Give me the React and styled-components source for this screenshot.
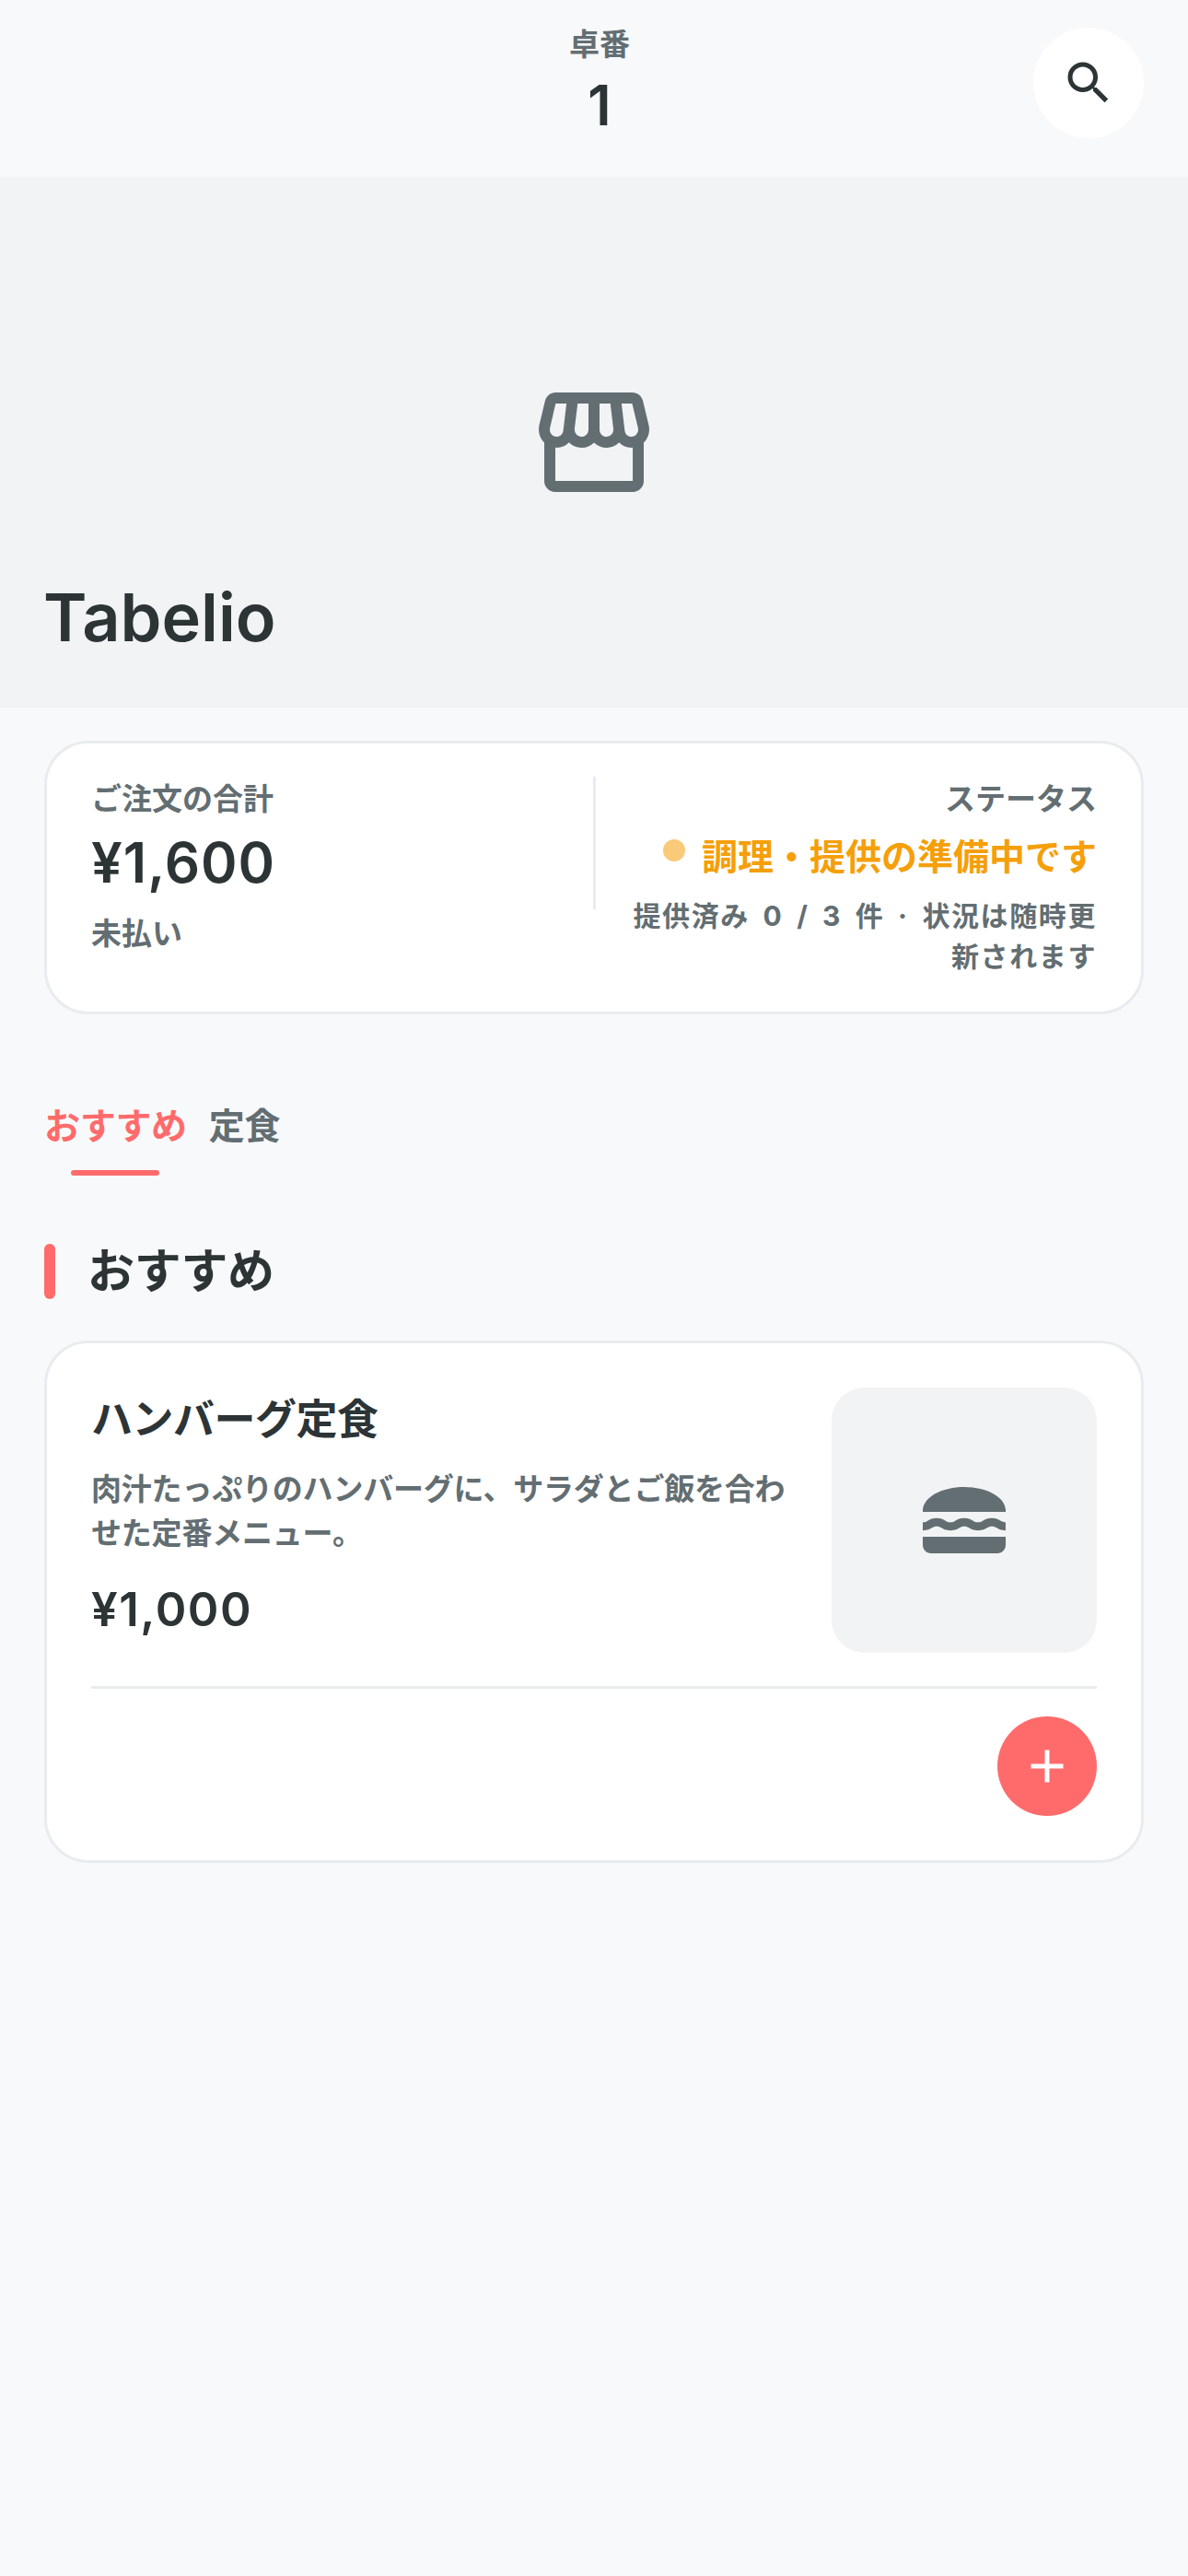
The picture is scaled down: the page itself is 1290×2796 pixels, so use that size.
import React from 'react';
import styled, { createGlobalStyle } from 'styled-components';
import { MdAdd, MdLunchDining, MdOutlineStorefront, MdSearch } from 'react-icons/md';

const GlobalStyle = createGlobalStyle`
  html, body {
    background: #f8f9fb;
    margin: 0;
    padding: 0;
  }
  body {
    color: #2d3436;
    font-family: Inter, "Noto Sans CJK JP", sans-serif;
  }
  * {
    box-sizing: border-box;
  }
`;

const Page = styled.div`
  background: #f8f9fb;
  min-height: 2796px;
  width: 1290px;
`;

const Header = styled.header`
  align-items: flex-start;
  display: flex;
  height: 192px;
  justify-content: space-between;
  padding: 24px 48px 0;
`;

const HeaderSpacer = styled.div`
  width: 132px;
`;

const TableInfo = styled.div`
  align-items: center;
  display: flex;
  flex-direction: column;
`;

const TableLabel = styled.span`
  color: #636e72;
  font-size: 33px;
  font-weight: 700;
  line-height: 48px;
`;

const TableNumber = styled.span`
  font-size: 60px;
  font-weight: 600;
  line-height: 66px;
  margin: 9px 0 0;
`;

const SearchButton = styled.button`
  align-items: center;
  background: #fff;
  border: 0;
  border-radius: 50%;
  color: #2d3436;
  display: flex;
  height: 120px;
  justify-content: center;
  margin: 6px 0 0;
  padding: 0;
  width: 120px;
`;

const Hero = styled.div`
  align-items: center;
  background: #f1f3f5;
  color: #636e72;
  display: flex;
  height: 576px;
  justify-content: center;
  position: relative;
`;

const BrandName = styled.h1`
  bottom: 56px;
  color: #2d3436;
  font-size: 72px;
  font-weight: 600;
  left: 47px;
  line-height: 84px;
  margin: 0;
  position: absolute;
`;

const Content = styled.main`
  display: flex;
  flex-direction: column;
  padding: 36px 48px 0;
`;

const SummaryCard = styled.section`
  background: #fff;
  border: 3px solid #e9ecef;
  border-radius: 48px;
  display: flex;
  height: 297px;
  padding: 36px 48px 0;
`;

const SummaryLeft = styled.div`
  flex: 1;
`;

const SummaryDivider = styled.div`
  background: #e9ecef;
  flex-shrink: 0;
  height: 144px;
  margin: 0 34px 0 0;
  width: 3px;
`;

const SummaryRight = styled.div`
  text-align: right;
  width: 510px;
`;

const SmallLabel = styled.div`
  color: #636e72;
  font-size: 33px;
  font-weight: 700;
  line-height: 48px;
`;

const TotalAmount = styled.div`
  font-size: 60px;
  font-weight: 600;
  letter-spacing: 1px;
  line-height: 72px;
  margin: 9px 0 0;
`;

const PaymentState = styled(SmallLabel)`
  margin: 17px 0 0;
`;

const StatusLine = styled.div`
  align-items: flex-start;
  display: flex;
  gap: 18px;
  justify-content: flex-end;
  margin: 12px 0 0;
`;

const StatusDot = styled.span`
  background: #f59f0a;
  border-radius: 50%;
  height: 24px;
  margin: 8px 0 0;
  opacity: 0.55;
  width: 24px;
`;

const StatusText = styled.span`
  color: #f59f0a;
  font-size: 39px;
  font-weight: 700;
  line-height: 54px;
`;

const StatusNote = styled.div`
  color: #636e72;
  font-size: 30px;
  font-weight: 700;
  letter-spacing: 1.6px;
  line-height: 44px;
  margin: 15px 0 0;
  word-spacing: 6px;
`;

const Tabs = styled.nav`
  display: flex;
  gap: 24px;
  margin: 91px 0 0;
`;

const Tab = styled.div`
  color: ${props => (props.$active ? '#ff6b6b' : '#636e72')};
  font-size: 39px;
  font-weight: 700;
  height: 84px;
  letter-spacing: -0.3px;
  line-height: 60px;
  position: relative;

  &::after {
    background: #ff6b6b;
    border-radius: 3px;
    bottom: 0;
    content: '';
    display: ${props => (props.$active ? 'block' : 'none')};
    height: 6px;
    left: 50%;
    margin: 0 0 0 -48px;
    position: absolute;
    width: 96px;
  }
`;

const SectionHeading = styled.div`
  align-items: center;
  display: flex;
  gap: 35px;
  margin: 74px 0 0;
`;

const SectionBar = styled.span`
  background: #ff6b6b;
  border-radius: 6px;
  height: 60px;
  width: 12px;
`;

const SectionTitle = styled.h2`
  font-size: 51px;
  font-weight: 700;
  letter-spacing: -0.3px;
  line-height: 60px;
  margin: 0;
`;

const MenuCard = styled.article`
  background: #fff;
  border: 3px solid #e9ecef;
  border-radius: 48px;
  display: flex;
  flex-direction: column;
  height: 567px;
  margin: 45px 0 0;
  padding: 48px 48px 0;
`;

const MenuBody = styled.div`
  display: flex;
  gap: 36px;
  justify-content: space-between;
`;

const MenuText = styled.div`
  flex: 1;
  padding: 5px 0 0;
`;

const MenuName = styled.h3`
  font-size: 45px;
  font-weight: 700;
  letter-spacing: -0.5px;
  line-height: 60px;
  margin: 0;
`;

const MenuDescription = styled.p`
  color: #636e72;
  font-size: 33px;
  font-weight: 700;
  letter-spacing: -0.2px;
  line-height: 48px;
  margin: 21px 0 0;
`;

const MenuPrice = styled.div`
  font-size: 51px;
  font-weight: 600;
  letter-spacing: 1.5px;
  line-height: 60px;
  margin: 29px 0 0;
`;

const MenuImage = styled.div`
  align-items: center;
  background: #f1f3f5;
  border-radius: 36px;
  color: #636e72;
  display: flex;
  flex-shrink: 0;
  height: 288px;
  justify-content: center;
  width: 288px;
`;

const MenuFooter = styled.div`
  border-top: 3px solid #e9ecef;
  display: flex;
  justify-content: flex-end;
  margin: 36px 0 0;
  padding: 30px 0 0;
`;

const AddButton = styled.button`
  align-items: center;
  background: #ff6b6b;
  border: 0;
  border-radius: 50%;
  color: #fff;
  display: flex;
  height: 108px;
  justify-content: center;
  padding: 0;
  width: 108px;
`;

const App = () => (
  <Page>
    <GlobalStyle />
    <Header>
      <HeaderSpacer />
      <TableInfo>
        <TableLabel>卓番</TableLabel>
        <TableNumber>1</TableNumber>
      </TableInfo>
      <SearchButton aria-label="検索">
        <MdSearch size={60} />
      </SearchButton>
    </Header>
    <Hero>
      <MdOutlineStorefront size={144} />
      <BrandName>Tabelio</BrandName>
    </Hero>
    <Content>
      <SummaryCard>
        <SummaryLeft>
          <SmallLabel>ご注文の合計</SmallLabel>
          <TotalAmount>¥1,600</TotalAmount>
          <PaymentState>未払い</PaymentState>
        </SummaryLeft>
        <SummaryDivider />
        <SummaryRight>
          <SmallLabel>ステータス</SmallLabel>
          <StatusLine>
            <StatusDot />
            <StatusText>調理・提供の準備中です</StatusText>
          </StatusLine>
          <StatusNote>提供済み 0 / 3 件 · 状況は随時更新されます</StatusNote>
        </SummaryRight>
      </SummaryCard>
      <Tabs>
        <Tab $active>おすすめ</Tab>
        <Tab>定食</Tab>
      </Tabs>
      <SectionHeading>
        <SectionBar />
        <SectionTitle>おすすめ</SectionTitle>
      </SectionHeading>
      <MenuCard>
        <MenuBody>
          <MenuText>
            <MenuName>ハンバーグ定食</MenuName>
            <MenuDescription>肉汁たっぷりのハンバーグに、サラダとご飯を合わせた定番メニュー。</MenuDescription>
            <MenuPrice>¥1,000</MenuPrice>
          </MenuText>
          <MenuImage>
            <MdLunchDining size={108} />
          </MenuImage>
        </MenuBody>
        <MenuFooter>
          <AddButton aria-label="追加">
            <MdAdd size={60} />
          </AddButton>
        </MenuFooter>
      </MenuCard>
    </Content>
  </Page>
);

export default App;
